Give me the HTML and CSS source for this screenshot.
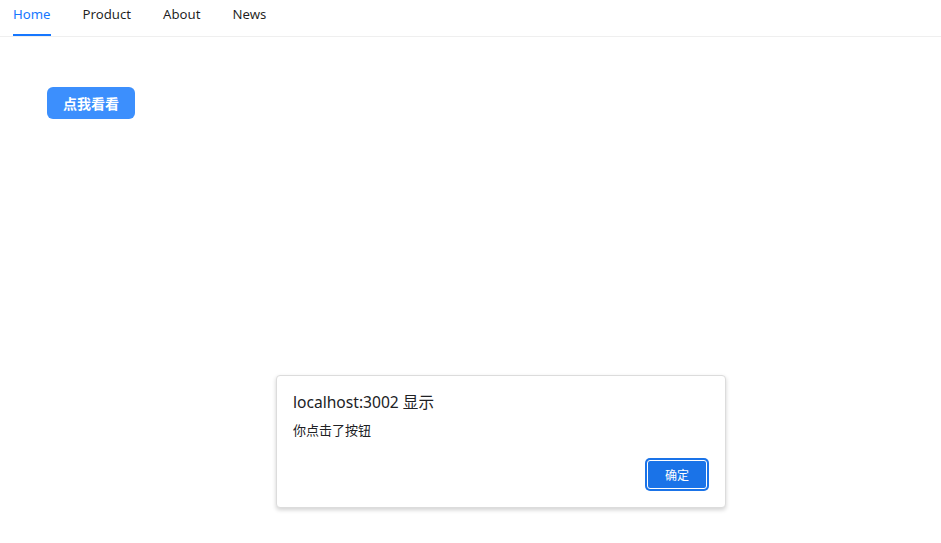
FILE: index.html
```html
<!DOCTYPE html>
<html lang="zh">
<head>
<meta charset="utf-8">
<link rel="stylesheet" href="styles.css">
</head>
<body>
<nav class="menu">
  <a class="item active">Home</a>
  <a class="item">Product</a>
  <a class="item">About</a>
  <a class="item">News</a>
</nav>
<main class="content">
  <button class="btn-primary">点我看看</button>
</main>
<div class="dialog">
  <div class="dialog-title">localhost:3002 显示</div>
  <div class="dialog-msg">你点击了按钮</div>
  <div class="dialog-actions">
    <button class="btn-ok">确定</button>
  </div>
</div>
</body>
</html>
```
FILE: styles.css
```css
html, body {
  margin: 0;
  padding: 0;
  background: #fff;
  font-family: "Noto Sans", "Noto Sans CJK SC", sans-serif;
}
.menu {
  display: flex;
  gap: 32px;
  height: 37px;
  padding-left: 13px;
  border-bottom: 1px solid #efefef;
  box-sizing: border-box;
}
.item {
  display: block;
  height: 36px;
  line-height: 28px;
  font-size: 13.2px;
  color: rgba(0,0,0,0.88);
  box-sizing: border-box;
  cursor: pointer;
}
.item.active {
  color: #1677ff;
  border-bottom: 2px solid #1677ff;
}
.content {
  padding: 50px 0 0 47px;
}
.btn-primary {
  width: 88px;
  height: 32px;
  border: none;
  border-radius: 6px;
  background: #3c8ffd;
  color: #fff;
  font-family: "Noto Sans CJK SC", sans-serif;
  font-size: 14px;
  font-weight: 600;
  padding: 0;
}
.dialog {
  position: absolute;
  left: 276px;
  top: 375px;
  width: 450px;
  height: 133px;
  box-sizing: border-box;
  background: #fff;
  border: 1px solid #dcdcdc;
  border-radius: 4px;
  box-shadow: 0 2px 4px rgba(0,0,0,0.18);
  padding: 15px 16px 16px 16px;
  display: flex;
  flex-direction: column;
}
.dialog-title {
  font-family: "Noto Sans", "Noto Sans CJK SC", sans-serif;
  font-size: 15.6px;
  line-height: 22px;
  color: #202124;
}
.dialog-msg {
  margin-top: 8px;
  font-family: "Noto Sans CJK SC", sans-serif;
  font-size: 13px;
  line-height: 18px;
  color: #202124;
}
.dialog-actions {
  display: flex;
  justify-content: flex-end;
  margin-top: auto;
}
.btn-ok {
  box-sizing: border-box;
  width: 60px;
  height: 29px;
  padding: 0;
  margin: 0 2px 2px 0;
  background: #1a73e8;
  color: #fff;
  border: 1px solid #fff;
  box-shadow: 0 0 0 2px #1a73e8;
  border-radius: 3px;
  font-family: "Noto Sans CJK SC", sans-serif;
  font-size: 12px;
}
```
